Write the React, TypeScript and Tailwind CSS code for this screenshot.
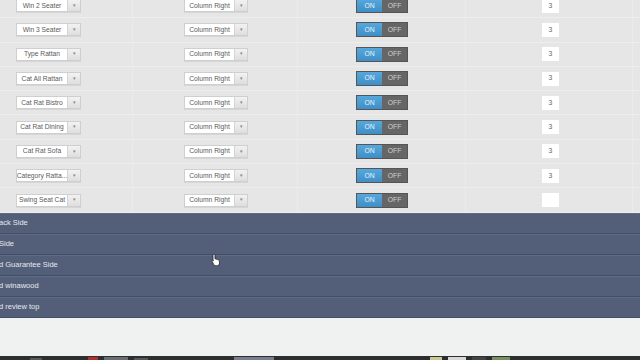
const rows = [
  { name: "Win 2 Seater", value: "3" },
  { name: "Win 3 Seater", value: "3" },
  { name: "Type Rattan", value: "3" },
  { name: "Cat All Rattan", value: "3" },
  { name: "Cat Rat Bistro", value: "3" },
  { name: "Cat Rat Dining", value: "3" },
  { name: "Cat Rat Sofa", value: "3" },
  { name: "Category Ratta...", value: "3" },
  { name: "Swing Seat Cat", value: "" },
];

const sections = ["ack Side", "Side", "d Guarantee Side", "d winawood", "d review top"];

function Select({ label, width }: { label: string; width: string }) {
  return (
    <div className="flex h-[13px] border border-[#cfcfcf] bg-white shadow-[0_1px_0_#d6d6d6]">
      <div className={`${width} flex items-center justify-center overflow-hidden whitespace-nowrap px-[1px] text-[6.7px] text-[#5a5a5a]`}>
        {label}
      </div>
      <div className="flex w-[13px] items-center justify-center border-l border-[#d4d4d4] bg-gradient-to-b from-[#f2f2f2] to-[#dedede] text-[5px] text-[#888]">
        ▾
      </div>
    </div>
  );
}

function Toggle() {
  return (
    <div className="flex h-[15px] w-[52px] border border-[#555] bg-[#666] text-[6.8px]">
      <div className="flex w-[25px] items-center justify-center bg-gradient-to-b from-[#56a8dc] to-[#3f8fc6] text-[#e8f3fb]">
        ON
      </div>
      <div className="flex flex-1 items-center justify-center text-[#d0d0d0]">OFF</div>
    </div>
  );
}

export default function App() {
  return (
    <div
      className="relative flex h-[360px] w-[640px] flex-col overflow-hidden bg-[#f0f2f2]"
      style={{ fontFamily: '"Liberation Sans", Arial, sans-serif' }}
    >
      {/* settings table */}
      <div className="-mt-[6px] flex flex-col bg-[#e6e6e6]">
        {rows.map((r, i) => (
          <div key={i} className="flex h-[24.3px] border-b border-[#eeeeee]">
            <div className="flex w-[133px] items-center border-r border-[#ebebeb] pl-[16px]">
              <Select label={r.name} width="w-[50px]" />
            </div>
            <div className="flex w-[165px] items-center border-r border-[#ebebeb] pl-[51px]">
              <Select label="Column Right" width="w-[49px]" />
            </div>
            <div className="flex w-[168px] items-center border-r border-[#ebebeb] pl-[58px]">
              <Toggle />
            </div>
            <div className="flex w-[167px] items-center border-r border-[#ebebeb] pl-[76px]">
              <div className="flex h-[14px] w-[17px] items-center justify-center bg-white text-[6.8px] text-[#666]">
                {r.value}
              </div>
            </div>
            <div className="flex-1" />
          </div>
        ))}
      </div>

      {/* collapsed sections */}
      <div className="flex flex-col bg-[#535f79]">
        {sections.map((s, i) => (
          <div
            key={i}
            className="flex h-[21px] items-center border-b border-[#434e65] text-[7.5px] text-[#e4e8ee] shadow-[inset_0_1px_0_#5f6a84]"
          >
            <span className="-ml-[1px]">{s}</span>
          </div>
        ))}
      </div>

      <div className="flex-1" />

      {/* taskbar strip */}
      <div className="flex h-[4px] items-end gap-[6px] bg-[#2c2e30] px-[30px]">
        <div className="h-[2px] w-[12px] bg-[#5a5a5a]" />
        <div className="ml-[40px] h-[3px] w-[10px] bg-[#b03030]" />
        <div className="h-[3px] w-[24px] bg-[#6a6e72]" />
        <div className="h-[2px] w-[14px] bg-[#55585c]" />
        <div className="ml-[80px] h-[3px] w-[40px] bg-[#7a7f90]" />
        <div className="ml-[150px] h-[3px] w-[12px] bg-[#c8c890]" />
        <div className="h-[3px] w-[18px] bg-[#d8d8d8]" />
        <div className="h-[3px] w-[14px] bg-[#444]" />
        <div className="h-[3px] w-[18px] bg-[#7a9060]" />
      </div>

      {/* mouse cursor */}
      <svg className="absolute left-[211px] top-[253px]" width="10" height="13" viewBox="0 0 10 13">
        <path
          d="M3 1.2c.6 0 1 .4 1 1V6l.3-.1c.5-.2 1 0 1.2.4.4-.2 1-.1 1.2.4.5-.2 1.1 0 1.3.5.2.4.5 1.500.5 2.8 0 1.6-1 2.8-2.5 2.8H4.8c-.9 0-1.6-.5-2-1.2L1.2 8.5c-.3-.5-.1-1 .3-1.2.4-.2.9 0 1.2.3L2 7.2V2.2c0-.6.4-1 1-1z"
          fill="#fff"
          stroke="#222"
          strokeWidth="0.8"
        />
      </svg>
    </div>
  );
}
